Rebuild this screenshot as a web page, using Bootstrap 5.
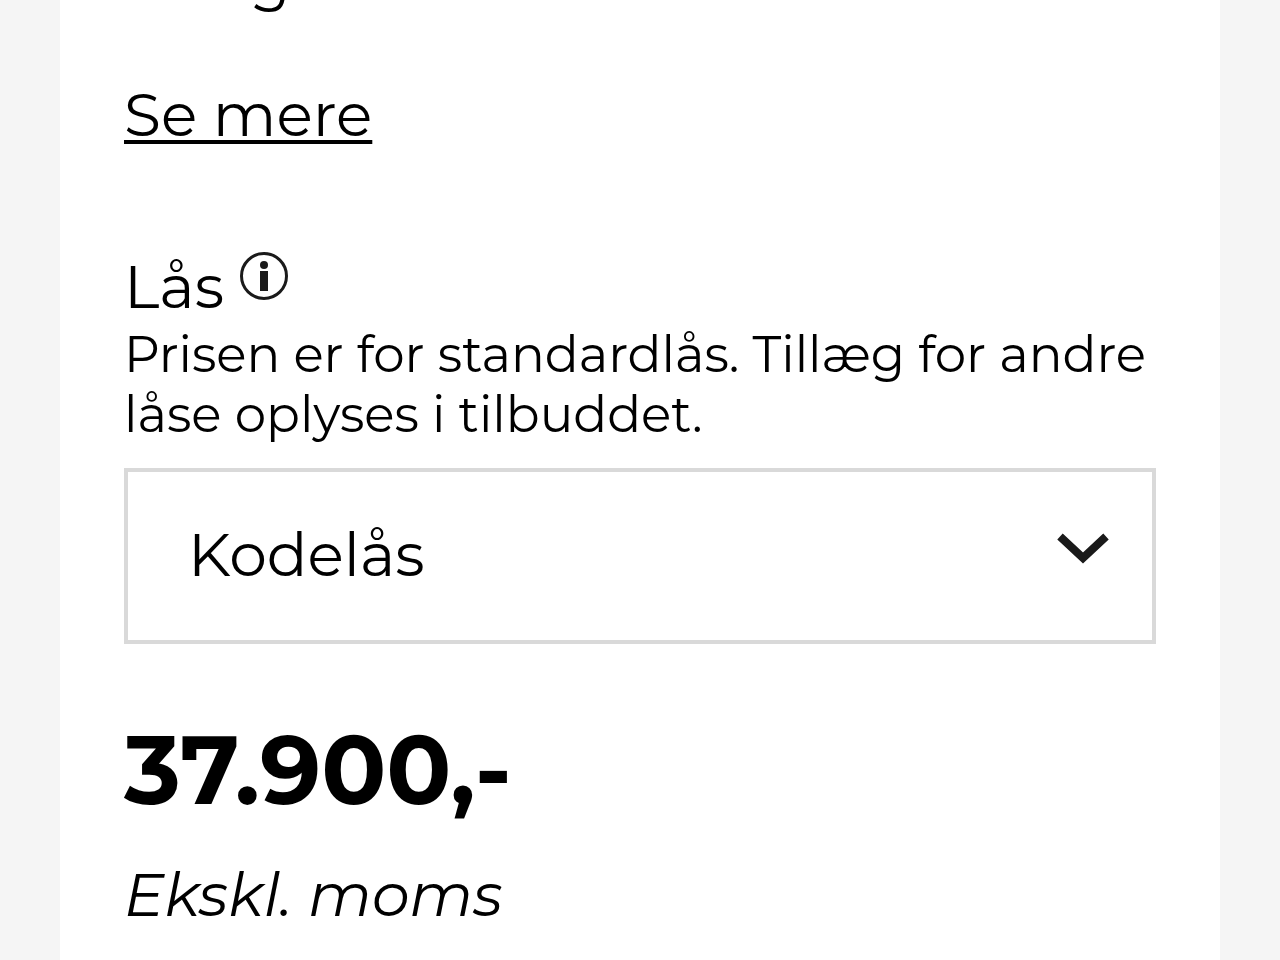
<!DOCTYPE html>
<html lang="da">
<head>
<meta charset="utf-8">
<meta name="viewport" content="width=device-width, initial-scale=1">
<title>Lås</title>
<link href="https://cdn.jsdelivr.net/npm/bootstrap@5.3.0/dist/css/bootstrap.min.css" rel="stylesheet">
<style>
body { background: #f5f5f5; color: #000; font-family: Montserrat, Inter, sans-serif; font-size: 60px; line-height: 72px; overflow-x: hidden; }
.page { padding: 0 60px; }
.panel { background: #fff; min-height: 100vh; padding: 0 64px 24px; overflow: hidden; }
.teaser { margin-top: -57px; }
.more { color: #000; margin-top: 64px; text-decoration-thickness: 4px; text-underline-offset: 4px; }
.option { margin-top: 100px; }
.info { width: 48px; height: 48px; margin: 1px 0 0 16px; }
.note { font-size: 50px; line-height: 60px; padding-top: 2px; margin-bottom: 23px; }
.lock-select { border: 4px solid #d9d9d9; border-radius: 0; color: #000; font-size: 60px; line-height: 72px; height: 176px; padding: 0 120px 2px 60px;
  background-image: url("data:image/svg+xml,%3Csvg xmlns='http://www.w3.org/2000/svg' viewBox='0 0 52 32'%3E%3Cpath d='M3 3.500L26 25L49 3.500' fill='none' stroke='%231a1a1a' stroke-width='8'/%3E%3C/svg%3E");
  background-size: 52px 32px; background-position: right 43px top 61px; }
.price { font-size: 96px; line-height: 120px; font-weight: 700; margin-top: 66px; }
.vat { margin-top: 29px; }
</style>
</head>
<body>
<main class="page">
  <section class="panel">
    <p class="teaser mb-0">Få og bedre lås</p>
    <a href="#" class="more d-inline-block">Se mere</a>
    <div class="option">
      <div class="d-flex align-items-start">
        <label for="lock">Lås</label>
        <svg class="info" viewBox="0 0 48 48" role="img" aria-label="Information"><circle cx="24" cy="24" r="22.500" fill="none" stroke="#1a1a1a" stroke-width="3"/><circle cx="24" cy="13" r="4" fill="#1a1a1a"/><path d="M20 19h8v20h-8z" fill="#1a1a1a"/></svg>
      </div>
      <p class="note">Prisen er for standardlås. Tillæg for andre låse oplyses i tilbuddet.</p>
      <select id="lock" class="lock-select form-select"><option>Kodelås</option><option>Standardlås</option></select>
    </div>
    <p class="price mb-0">37.900,-</p>
    <p class="vat fst-italic mb-0">Ekskl. moms</p>
  </section>
</main>
<script src="https://cdn.jsdelivr.net/npm/bootstrap@5.3.0/dist/js/bootstrap.bundle.min.js"></script>
</body>
</html>
